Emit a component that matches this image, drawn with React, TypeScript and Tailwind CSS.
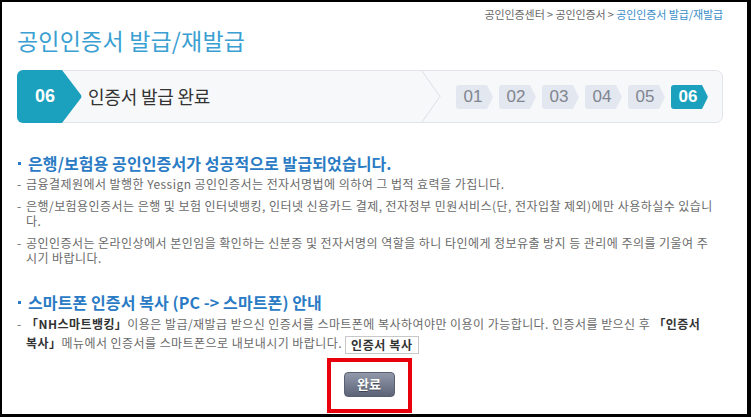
import React from "react";

const steps = ["01", "02", "03", "04", "05", "06"];

function Badge({ label, active }: { label: string; active: boolean }) {
  const fill = active ? "#1ba1bd" : "#e3e7ef";
  return (
    <div className="flex h-[24px] items-stretch">
      <div
        className={
          active
            ? "w-[31px] rounded-l-[3px] bg-[#1ba1bd] flex items-center justify-center pl-[3px] text-[17px] font-bold text-white"
            : "w-[31px] rounded-l-[3px] bg-[#e3e7ef] flex items-center justify-center pl-[3px] text-[17px] text-[#80858f]"
        }
      >
        {label}
      </div>
      <svg width="6" height="24" viewBox="0 0 6 24">
        <path d="M0 0 L5.5 11 Q6 12 5.5 13 L0 24 Z" fill={fill} />
      </svg>
    </div>
  );
}

function Bullet({ children }: { children: React.ReactNode }) {
  return (
    <h3 className="flex items-center h-[20px] text-[16px] font-bold text-[#2a7bc4] tracking-[0.1px]">
      <span className="w-[3px] h-[3px] bg-[#2a7bc4] ml-[1px] mr-[7px]" />
      {children}
    </h3>
  );
}

function Item({ children }: { children: React.ReactNode }) {
  return (
    <p className="flex text-[12px] leading-[15px] text-[#6a6a6a] tracking-[0.45px] whitespace-nowrap">
      <span className="w-[9px] shrink-0">-</span>
      <span>{children}</span>
    </p>
  );
}

export default function App() {
  return (
    <div className="w-[751px] h-[417px] border-l-2 border-t-2 border-r-4 border-b-[3px] border-black bg-white pl-[15px] pr-[24px] [font-family:'Noto_Sans_CJK_KR','Liberation_Sans',sans-serif]">
      <div className="h-[24px] flex items-center justify-end text-[11px] text-[#666] tracking-[-0.1px]">
        <span>공인인증센터 &gt; 공인인증서 &gt;&nbsp;</span>
        <span className="text-[#3a8ec8]">공인인증서 발급/재발급</span>
      </div>

      <h1 className="h-[28px] text-[23px] leading-[28px] text-[#3aa0d2] tracking-[0.2px]">
        공인인증서 발급/재발급
      </h1>

      <div className="mt-[16px] h-[53px] flex items-stretch rounded-[7px] border border-[#e2e4e8] bg-[#f7f8fa]">
        <div className="-my-px -ml-px flex items-stretch">
          <div className="w-[45px] rounded-l-[6px] bg-[#1ba1bd] flex items-center pl-[18px] text-[18px] font-semibold text-white [font-family:'Liberation_Sans',sans-serif]">
            06
          </div>
          <svg width="20" height="53" viewBox="0 0 20 53">
            <path d="M0 0 L19 25 Q20 26.5 19 28 L0 53 Z" fill="#1ba1bd" />
          </svg>
        </div>
        <div className="flex-1 flex items-center pl-[6px] text-[18px] text-[#333] tracking-[-0.2px]">
          인증서 발급 완료
        </div>
        <svg width="22" height="51" viewBox="0 0 22 51" className="shrink-0">
          <polyline points="2,0 20,25.5 2,51" fill="none" stroke="#dcdfe5" strokeWidth="1" />
        </svg>
        <div className="ml-[14px] mr-[14px] flex items-center gap-[6px] [font-family:'Liberation_Sans',sans-serif]">
          {steps.map((s) => (
            <Badge key={s} label={s} active={s === "06"} />
          ))}
        </div>
      </div>

      <div className="mt-[30px]">
        <Bullet>은행/보험용 공인인증서가 성공적으로 발급되었습니다.</Bullet>
        <div className="mt-[3px] flex flex-col gap-[7px]">
          <Item>금융결제원에서 발행한 Yessign 공인인증서는 전자서명법에 의하여 그 법적 효력을 가집니다.</Item>
          <Item>
            은행/보험용인증서는 은행 및 보험 인터넷뱅킹, 인터넷 신용카드 결제, 전자정부 민원서비스(단, 전자입찰 제외)에만 사용하실수 있습니
            <br />
            다.
          </Item>
          <Item>
            공인인증서는 온라인상에서 본인임을 확인하는 신분증 및 전자서명의 역할을 하니 타인에게 정보유출 방지 등 관리에 주의를 기울여 주
            <br />
            시기 바랍니다.
          </Item>
        </div>
      </div>

      <div className="mt-[27px]">
        <Bullet>스마트폰 인증서 복사 (PC -&gt; 스마트폰) 안내</Bullet>
        <p className="mt-[2px] flex text-[12px] leading-[19px] text-[#6a6a6a] tracking-[0.45px] whitespace-nowrap">
          <span className="w-[9px] shrink-0">-</span>
          <span>
            <b className="text-[#333]">「NH스마트뱅킹」</b>이용은 발급/재발급 받으신 인증서를 스마트폰에 복사하여야만 이용이 가능합니다. 인증서를 받으신 후{" "}
            <b className="text-[#333]">「인증서</b>
            <br />
            <b className="text-[#333]">복사」</b>메뉴에서 인증서를 스마트폰으로 내보내시기 바랍니다.
            <button className="ml-[3px] h-[18px] px-[5px] border border-[#c8c8c8] bg-white text-[12px] leading-[16px] font-bold text-[#333] tracking-[0.6px] align-middle">
              인증서 복사
            </button>
          </span>
        </p>
      </div>

      <div className="mt-[4px] flex justify-center pr-[2px]">
        <div className="w-[85px] h-[55px] border-4 border-[#e8000c] flex justify-center pt-[10px]">
          <button className="w-[51px] h-[25px] rounded-[4px] border border-[#59606f] bg-gradient-to-b from-[#9199ab] to-[#5d6477] text-[13px] font-bold text-white [text-shadow:0_1px_0_rgba(0,0,0,0.4)]">
            완료
          </button>
        </div>
      </div>
    </div>
  );
}
